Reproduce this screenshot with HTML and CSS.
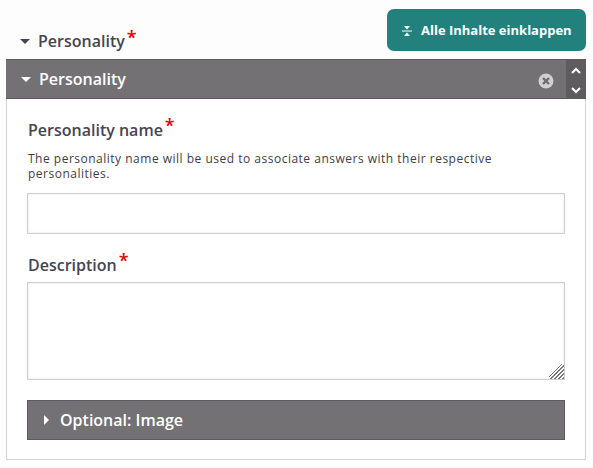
FILE: index.html
```html
<!DOCTYPE html>
<html lang="en">
<head>
  <meta charset="utf-8">
  <title>Personality</title>
  <link rel="stylesheet" href="styles.css">
</head>
<body>
  <div class="top_row">
    <div class="list_title">
      <span class="caret_down dark"></span>
      <span>Personality</span><span class="req">*</span>
    </div>
    <button class="collapse_btn">
      <svg class="collapse_icon" width="10" height="12" viewBox="0 0 10 12">
        <path d="M5 4.5L2 1h6zM5 7.5L2 11h6z" fill="#fff"/>
        <path d="M0 6h10" stroke="#fff" stroke-width="1" fill="none"/>
      </svg>
      Alle Inhalte einklappen
    </button>
  </div>

  <div class="panel">
    <div class="panel_head">
      <span class="caret_down"></span>
      <span class="panel_title">Personality</span>
      <svg class="remove_icon" width="16" height="16" viewBox="0 0 16 16">
        <circle cx="8" cy="8" r="7.5" fill="#d0d0d0"/>
        <path d="M5 5l6 6M11 5l-6 6" stroke="#6f6c70" stroke-width="2.4"/>
      </svg>
      <div class="move_btns">
        <svg width="12" height="8" viewBox="0 0 12 8"><path d="M2 6l4-4 4 4" stroke="#fff" stroke-width="2" fill="none"/></svg>
        <svg width="12" height="8" viewBox="0 0 12 8"><path d="M2 2l4 4 4-4" stroke="#fff" stroke-width="2" fill="none"/></svg>
      </div>
    </div>

    <div class="panel_body">
      <label class="field_label">Personality name<span class="req">*</span></label>
      <p class="hint">The personality name will be used to associate answers with their respective personalities.</p>
      <input class="text_input" type="text">

      <label class="field_label desc_label">Description<span class="req">*</span></label>
      <textarea class="text_area"></textarea>

      <div class="group_head">
        <span class="caret_right"></span>
        <span class="panel_title group_title">Optional: Image</span>
      </div>
    </div>
  </div>
</body>
</html>
```

FILE: styles.css
```css
* {
  box-sizing: border-box;
}
body {
  margin: 0;
  padding: 9px 7px 0 6px;
  background-color: #fdfdfd;
  font-family: "Open Sans", "Liberation Sans", sans-serif;
  color: #474550;
}
.top_row {
  display: flex;
  justify-content: space-between;
  align-items: flex-end;
  height: 50px;
}
.list_title {
  display: flex;
  align-items: center;
  margin: 0 0 7px 14px;
  font-size: 16px;
  font-weight: 600;
  line-height: 22px;
}
.list_title .caret_down {
  margin-right: 8px;
}
.req {
  position: relative;
  top: -4px;
  margin-left: 2px;
  color: #e00000;
  font-size: 18px;
  line-height: 16px;
  font-weight: 600;
}
.caret_down {
  width: 0;
  height: 0;
  border-left: 5px solid transparent;
  border-right: 5px solid transparent;
  border-top: 5px solid #fff;
}
.caret_down.dark {
  border-top-color: #474550;
}
.caret_right {
  width: 0;
  height: 0;
  border-top: 5px solid transparent;
  border-bottom: 5px solid transparent;
  border-left: 5px solid #fff;
}
.collapse_btn {
  display: flex;
  align-items: center;
  gap: 9px;
  width: 199px;
  height: 42px;
  margin-bottom: 8px;
  padding: 0 0 0 15px;
  border: none;
  border-radius: 7px;
  background-color: #22817c;
  color: #fff;
  font-family: inherit;
  font-size: 13px;
  font-weight: 700;
}
.collapse_icon {
  margin-top: 2px;
}
.panel {
  height: 401px;
  border: 1px solid #d4d4d4;
  border-top: none;
  background-color: #fff;
}
.panel_head {
  display: flex;
  align-items: center;
  height: 40px;
  margin: 0 -1px;
  padding-left: 15px;
  border-top: 1px solid #5c5a5e;
  border-bottom: 1px solid #5c5a5e;
  background-color: #747175;
  color: #fff;
}
.panel_title {
  margin-left: 8px;
  font-size: 16px;
  font-weight: 600;
}
.group_title {
  margin-left: 11px;
}
.remove_icon {
  margin-left: auto;
  margin-top: 4px;
  margin-right: 12px;
}
.move_btns {
  display: flex;
  flex-direction: column;
  justify-content: space-between;
  align-items: center;
  align-self: stretch;
  width: 20px;
  padding: 7px 0 4px;
  background-color: #5f5c60;
}
.panel_body {
  padding: 20px 20px 0;
}
.field_label {
  display: block;
  margin-left: 1px;
  font-size: 16px;
  font-weight: 600;
  line-height: 22px;
}
.hint {
  margin: 10px 30px 12px 1px;
  font-size: 12px;
  letter-spacing: 0.5px;
  line-height: 15px;
  color: #3f3d42;
}
.text_input {
  display: block;
  width: 100%;
  height: 41px;
  border: 1px solid #cfcfcf;
  box-shadow: inset 0 0 3px #e4e4e4;
  background-color: #fff;
}
.desc_label {
  margin-top: 20px;
  margin-bottom: 6px;
}
.text_area {
  display: block;
  width: 100%;
  height: 98px;
  border: 1px solid #cfcfcf;
  box-shadow: inset 0 0 3px #e4e4e4;
  background-color: #fff;
}
.text_area::-webkit-resizer {
  background-color: transparent;
  background-image:
    linear-gradient(135deg, #fff 42%, rgba(255, 255, 255, 0) 42%),
    repeating-linear-gradient(135deg, #7a777c 0 1.3px, #fff 1.3px 2.8px);
}
.group_head {
  display: flex;
  align-items: center;
  height: 40px;
  margin-top: 20px;
  padding-left: 16px;
  border: 1px solid #5c5a5e;
  background-color: #747175;
  color: #fff;
}
```
